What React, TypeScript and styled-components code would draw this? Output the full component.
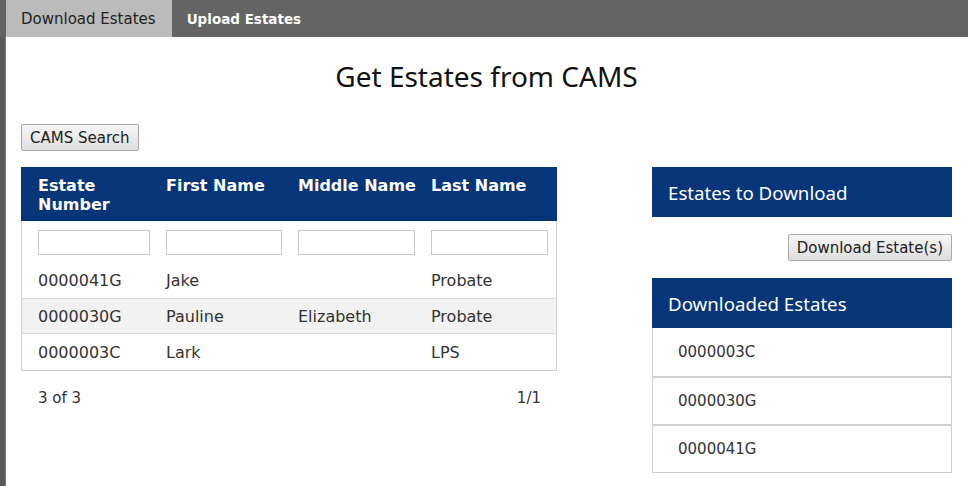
import React from "react";
import styled, { createGlobalStyle } from "styled-components";

const GlobalStyle = createGlobalStyle`
  html, body { margin: 0; padding: 0; background: #fff; }
  body { font-family: "DejaVu Sans", Verdana, sans-serif; font-size: 15px; color: #222; }
  * { box-sizing: border-box; }
`;

const Frame = styled.div`
  display: flex;
  width: 968px;
  height: 486px;
  overflow: hidden;
  background: #fff;
`;

const SideEdge = styled.div`
  width: 6px;
  flex: none;
  background: linear-gradient(to right, #5a5a5a 0, #5a5a5a 5px, #9a9a9a 6px);
`;

const Main = styled.div`
  flex: 1;
  display: flex;
  flex-direction: column;
  min-width: 0;
`;

const TabBar = styled.div`
  height: 37px;
  display: flex;
  background: #646464;
  margin-left: -6px;
  padding-left: 6px;
`;

const Tab = styled.div<{ $active?: boolean }>`
  display: flex;
  align-items: center;
  padding: 0 16px 0 15px;
  font-size: ${(p) => (p.$active ? "15px" : "13.5px")};
  background: ${(p) => (p.$active ? "#bbbbbb" : "transparent")};
  color: ${(p) => (p.$active ? "#222" : "#fff")};
  font-weight: ${(p) => (p.$active ? "normal" : "bold")};
`;

const Content = styled.div`
  padding: 0 16px 0 15px;
  display: flex;
  flex-direction: column;
`;

const Title = styled.h1`
  margin: 20px 0 0;
  text-align: center;
  font-family: "Noto Sans", "Open Sans", sans-serif;
  font-weight: normal;
  font-size: 28px;
  line-height: 38px;
  color: #111;
`;

const Button = styled.button`
  font-family: "DejaVu Sans", Verdana, sans-serif;
  font-size: 15px;
  color: #222;
  background: linear-gradient(#f6f6f6, #dedede);
  border: 1px solid #a9a9a9;
  border-radius: 2px;
  height: 27px;
  padding: 0 8px;
  cursor: pointer;
`;

const SearchRow = styled.div`
  margin-top: 29px;
  display: flex;
`;

const Columns = styled.div`
  margin-top: 16px;
  display: flex;
  justify-content: space-between;
`;

const Left = styled.div`
  width: 536px;
  display: flex;
  flex-direction: column;
`;

const Table = styled.div`
  border: 1px solid #cfcfcf;
  border-top: none;
`;

const Grid = styled.div`
  display: grid;
  grid-template-columns: 128px 132px 133px 1fr;
  padding: 0 0 0 16px;
`;

const HeadRow = styled(Grid)`
  background: #06357a;
  color: #fff;
  font-weight: bold;
  font-size: 16px;
  line-height: 19px;
  height: 54px;
  padding-top: 9px;
  margin: 0 -1px;
  padding-left: 17px;
`;

const FilterRow = styled(Grid)`
  height: 41px;
  align-items: center;
  padding-top: 2px;
`;

const FilterInput = styled.input`
  width: calc(100% - 16px);
  height: 25px;
  border: 1px solid #c8c8c8;
  outline: none;
  &:last-child { width: calc(100% - 8px); }
`;

const DataRow = styled(Grid)<{ $alt?: boolean }>`
  height: 36px;
  align-items: center;
  font-size: 16px;
  background: ${(p) => (p.$alt ? "#f2f2f2" : "#fff")};
  border-top: ${(p) => (p.$alt ? "1px solid #dcdcdc" : "none")};
  border-bottom: ${(p) => (p.$alt ? "1px solid #dcdcdc" : "none")};
  color: #333;
`;

const Pager = styled.div`
  display: flex;
  justify-content: space-between;
  padding: 18px 16px 0 17px;
  color: #333;
  font-size: 15px;
`;

const Right = styled.div`
  width: 300px;
  display: flex;
  flex-direction: column;
`;

const PanelHead = styled.div`
  background: #06357a;
  color: #fff;
  height: 50px;
  display: flex;
  align-items: center;
  padding-left: 16px;
  font-family: "Noto Sans", "Open Sans", sans-serif;
  font-size: 18.7px;
`;

const ButtonRow = styled.div`
  display: flex;
  justify-content: flex-end;
  padding: 17px 0 17px;
`;

const List = styled.div`
  border: 1px solid #cfcfcf;
  border-top: none;
`;

const ListItem = styled.div`
  height: 48px;
  display: flex;
  align-items: center;
  padding-left: 25px;
  color: #333;
  font-size: 15px;
  & + & { border-top: 2px solid #cfcfcf; }
`;

const rows = [
  { num: "0000041G", first: "Jake", middle: "", last: "Probate" },
  { num: "0000030G", first: "Pauline", middle: "Elizabeth", last: "Probate" },
  { num: "0000003C", first: "Lark", middle: "", last: "LPS" },
];

export default function App() {
  return (
    <>
      <GlobalStyle />
      <Frame>
        <SideEdge />
        <Main>
          <TabBar>
            <Tab $active>Download Estates</Tab>
            <Tab>Upload Estates</Tab>
          </TabBar>
          <Content>
            <Title>Get Estates from CAMS</Title>
            <SearchRow>
              <Button>CAMS Search</Button>
            </SearchRow>
            <Columns>
              <Left>
                <Table>
                  <HeadRow>
                    <div>Estate<br />Number</div>
                    <div>First Name</div>
                    <div>Middle Name</div>
                    <div>Last Name</div>
                  </HeadRow>
                  <FilterRow>
                    <FilterInput />
                    <FilterInput />
                    <FilterInput />
                    <FilterInput />
                  </FilterRow>
                  {rows.map((r, i) => (
                    <DataRow key={r.num} $alt={i === 1}>
                      <div>{r.num}</div>
                      <div>{r.first}</div>
                      <div>{r.middle}</div>
                      <div>{r.last}</div>
                    </DataRow>
                  ))}
                </Table>
                <Pager>
                  <span>3 of 3</span>
                  <span>1/1</span>
                </Pager>
              </Left>
              <Right>
                <PanelHead>Estates to Download</PanelHead>
                <ButtonRow>
                  <Button>Download Estate(s)</Button>
                </ButtonRow>
                <PanelHead>Downloaded Estates</PanelHead>
                <List>
                  <ListItem>0000003C</ListItem>
                  <ListItem>0000030G</ListItem>
                  <ListItem>0000041G</ListItem>
                </List>
              </Right>
            </Columns>
          </Content>
        </Main>
      </Frame>
    </>
  );
}
